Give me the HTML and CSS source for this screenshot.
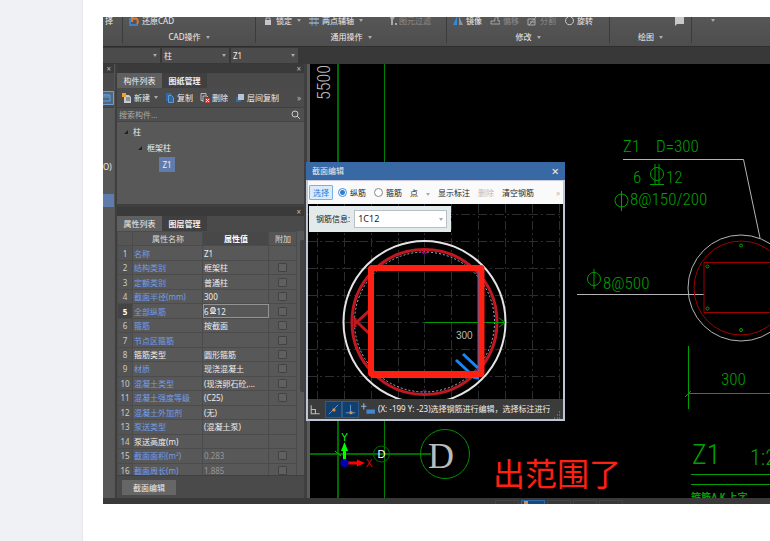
FILE: index.html
```html
<!DOCTYPE html>
<html>
<head>
<meta charset="utf-8">
<title>截面编辑</title>
<link rel="stylesheet" href="styles.css">
</head>
<body>
<main class="page">
<div class="app">
  <header class="ribbon">
    <section class="group"><div class="tools"><span>择</span></div></section>
    <section class="group">
      <div class="tools"><button class="tool"><svg class="ico" viewBox="0 0 10 10"><path d="M1 2v7h8" fill="none" stroke="#3f7fc4" stroke-width="2"/><path d="M3 6V1l2 2c3-2 5 2 3 5" fill="none" stroke="#e0792c" stroke-width="2"/></svg>还原CAD</button></div>
      <div class="caption">CAD操作<i class="caret"></i></div>
    </section>
    <section class="group">
      <div class="tools lockset">
        <button class="tool"><svg class="ico" viewBox="0 0 10 10"><path d="M3 5V2h4v3" fill="none" stroke="#bbb"/><path d="M2 4h6v5H2z" fill="#c4c8cc"/></svg>锁定<i class="caret"></i></button>
        <button class="tool"><svg class="ico" viewBox="0 0 10 10"><path d="M3 0v10M7 0v10" stroke="#4f9bd8"/><path d="M0 3h10M0 7h10" stroke="#c8ccd0"/></svg>两点辅轴<i class="caret"></i></button>
        <button class="tool off last"><svg class="ico" viewBox="0 0 10 10"><path d="M2 1h5L5 4v5H3V4z" fill="#aaa"/><path d="M7 8h2" stroke="#aaa" stroke-width="2"/></svg>图元过滤</button>
      </div>
      <div class="caption mid">通用操作<i class="caret"></i></div>
    </section>
    <section class="group">
      <div class="tools edits">
        <button class="tool"><svg class="ico" viewBox="0 0 10 10"><path d="M4 0v9H0z" fill="#2f8be0"/><path d="M6 0v9h4z" fill="#8b9299"/></svg>镜像</button>
        <button class="tool off"><svg class="ico" viewBox="0 0 10 10"><path d="M1 8h9M1 5h4c-1-3 1-4 3-4v4h2v3M1 5v3" fill="none" stroke="#a4a4a4"/></svg>偏移</button>
        <button class="tool off"><svg class="ico" viewBox="0 0 10 10"><path d="M1 3h7v6H1zM2 9l7-8M3 6h5" fill="none" stroke="#aaa"/></svg>分割</button>
        <button class="tool"><svg class="ico" viewBox="0 0 10 10"><path d="M4 1a4 4 0 1 0 3 0" fill="none" stroke="#ccc"/></svg>旋转</button>
      </div>
      <div class="caption">修改<i class="caret"></i></div>
    </section>
    <section class="group">
      <div class="tools end"><svg class="ico" viewBox="0 0 10 10"><path d="M1 0h9v8H3l-2 2z" fill="#c9c9c9"/></svg></div>
      <div class="caption">绘图<i class="caret"></i></div>
    </section>
    <section class="group"><div class="tools more"><i class="caret"></i></div></section>
  </header>

  <nav class="pickers">
    <div class="pick"><select aria-label="楼层"><option></option></select><i class="caret"></i></div>
    <div class="pick"><select aria-label="构件"><option>柱</option></select><i class="caret"></i></div>
    <div class="pick"><select aria-label="名称"><option>Z1</option></select><i class="caret"></i></div>
  </nav>

  <div class="work">
    <aside class="sliver">
      <div class="strip"><button class="close">×</button></div>
      <div class="tabs"></div>
      <div class="bar"><svg class="sel" viewBox="0 0 11 14"><path d="M0 .5h10.500v13H0" fill="#52667d" stroke="#6c9fd4"/><path d="M0 4h7v6H0M0 6h7M2 3v2M5 3v2" fill="none" stroke="#5ba2e6"/></svg></div>
      <div class="code">O)</div>
      <div class="mark"></div>
    </aside>

    <aside class="side">
      <section class="panel">
        <div class="strip"><button class="close">×</button></div>
        <div class="tabs"><button class="tab on">构件列表</button><button class="tab">图纸管理</button></div>
        <div class="bar">
          <button class="tool"><svg class="ico" viewBox="0 0 10 10"><path d="M2 2h5l2 2v6H2z" fill="#c8ccd0"/><path d="M4 5h4M4 7h4" stroke="#555"/><path d="M0 0h4v4H0z" fill="#f0a030"/></svg>新建<i class="caret"></i></button>
          <button class="tool"><svg class="ico" viewBox="0 0 10 10"><path d="M1 0h5l1 2v6H1z" fill="#2f69a8"/><path d="M3.500 2.500h3l2 2v5h-5z" fill="#35669c" stroke="#5b9bd8"/></svg>复制</button>
          <button class="tool"><svg class="ico" viewBox="0 0 10 10"><path d="M1 .5h5v2M1 .5v7h2M3 3h4l1 1M3 3v6" fill="none" stroke="#bbb"/><path d="M5 5h5v5H5z" fill="#cf3c3c"/><path d="M6 6l3 3M9 6L6 9" stroke="#fff"/></svg>删除</button>
          <button class="tool"><svg class="ico" viewBox="0 0 10 10"><path d="M1 4h5v5H1z" fill="#38699f"/><path d="M3 1h6v6H3z" fill="#b9c4d2"/></svg>层间复制</button>
          <span class="chev">»</span>
        </div>
        <label class="search"><input type="text" aria-label="搜索构件" placeholder="搜索构件..."><svg class="ico" viewBox="0 0 10 10"><circle cx="4" cy="4" r="3" fill="none" stroke="#ccc"/><path d="M6 6l3 3" stroke="#ccc"/></svg></label>
        <ul class="tree">
          <li class="l1"><i class="tri"></i>柱</li>
          <li class="l2"><i class="tri"></i>框架柱</li>
          <li class="l3"><span class="chosen">Z1</span></li>
        </ul>
      </section>

      <section class="panel props">
        <div class="strip"><button class="close">×</button></div>
        <div class="tabs"><button class="tab on">属性列表</button><button class="tab">图层管理</button></div>
        <div class="sheet">
          <table>
            <colgroup><col class="c1"><col class="c2"><col class="c3"><col class="c4"></colgroup>
            <tr><th></th><th>属性名称</th><th class="hot">属性值</th><th>附加</th></tr>
            <tr><td>1</td><td>名称</td><td>Z1</td><td></td></tr>
            <tr><td>2</td><td>结构类别</td><td>框架柱</td><td><input type="checkbox" aria-label="结构类别"></td></tr>
            <tr><td>3</td><td>定额类别</td><td>普通柱</td><td><input type="checkbox" aria-label="定额类别"></td></tr>
            <tr><td>4</td><td>截面半径(mm)</td><td>300</td><td><input type="checkbox" aria-label="截面半径"></td></tr>
            <tr class="cur"><td>5</td><td>全部纵筋</td><td>6<svg class="bar-sign" viewBox="0 0 8 8"><path d="M3 0v6M5 0v6M1 6.500h6" stroke="#ddd"/><circle cx="4" cy="3" r="2.500" fill="none" stroke="#ddd"/></svg>12</td><td><input type="checkbox" aria-label="全部纵筋"></td></tr>
            <tr><td>6</td><td>箍筋</td><td>按截面</td><td><input type="checkbox" aria-label="箍筋"></td></tr>
            <tr><td>7</td><td>节点区箍筋</td><td></td><td><input type="checkbox" aria-label="节点区箍筋"></td></tr>
            <tr class="plain"><td>8</td><td>箍筋类型</td><td>圆形箍筋</td><td><input type="checkbox" aria-label="箍筋类型"></td></tr>
            <tr><td>9</td><td>材质</td><td>现浇混凝土</td><td><input type="checkbox" aria-label="材质"></td></tr>
            <tr><td>10</td><td>混凝土类型</td><td>(现浇卵石砼,...</td><td><input type="checkbox" aria-label="混凝土类型"></td></tr>
            <tr><td>11</td><td>混凝土强度等级</td><td>(C25)</td><td><input type="checkbox" aria-label="混凝土强度等级"></td></tr>
            <tr><td>12</td><td>混凝土外加剂</td><td>(无)</td><td></td></tr>
            <tr><td>13</td><td>泵送类型</td><td>(混凝土泵)</td><td></td></tr>
            <tr class="plain"><td>14</td><td>泵送高度(m)</td><td></td><td></td></tr>
            <tr class="dim"><td>15</td><td>截面面积(m²)</td><td>0.283</td><td><input type="checkbox" aria-label="截面面积"></td></tr>
            <tr class="dim"><td>16</td><td>截面周长(m)</td><td>1.885</td><td><input type="checkbox" aria-label="截面周长"></td></tr>
          </table>
          <div class="rail"><div class="thumb"></div></div>
        </div>
        <div class="foot"><button class="edit">截面编辑</button></div>
      </section>
    </aside>

    <section class="canvas">
      <svg class="drawing">
        <g transform="translate(-310 -64)" fill="none">
          <g stroke="#006c00">
            <path d="M338 64V498M310 454H431" stroke-width="2"/>
            <path d="M384.500 64V498" stroke="#008000"/>
            <circle cx="381.500" cy="454" r="8"/>
            <circle cx="445" cy="454" r="24.500" stroke="#009000"/>
            <path d="M335 451l6 5" stroke="#00d000"/>
          </g>
          <text x="-100" y="330" transform="rotate(-90)" class="cad gray" font-size="18">5500</text>
          <text x="381.500" y="458" class="tiny" text-anchor="middle">D</text>
          <text x="441" y="468" class="serif" text-anchor="middle">D</text>
          <path d="M344.500 462V449" stroke="#0f0" stroke-width="3"/><path d="M341 451l3.500-9 3.500 9z" fill="#0f0"/>
          <path d="M346 463h13" stroke="#f00" stroke-width="3"/><path d="M357 459.500l8 3.500-8 3.500z" fill="#f00"/>
          <circle cx="344.500" cy="463" r="4" fill="#0000b8"/>
          <text x="344.500" y="441" class="axis" fill="#0f0" text-anchor="middle">Y</text>
          <text x="369" y="467" class="axis" fill="#e00000" text-anchor="middle">X</text>

          <path d="M623 159.500H743.500L760 238M577 294.500H704" stroke="#b4b4b4"/>
          <circle cx="741" cy="288" r="53" stroke="#b4b4b4"/>
          <circle cx="741" cy="288" r="47" stroke="#a00000"/>
          <path d="M704 262.500H778V312.500H704z" stroke="#a00000"/>
          <g stroke="#00a000">
            <circle cx="741" cy="245.500" r="1.500"/><circle cx="707.500" cy="266.500" r="1.500"/><circle cx="707.500" cy="308.500" r="1.500"/><circle cx="741" cy="330" r="1.500"/>
            <circle cx="657" cy="174" r="6.500"/><path d="M655 164v20M659 164v20M650 184.500h14"/>
            <circle cx="621.500" cy="200.500" r="6.500"/><path d="M621.500 191v20"/>
            <circle cx="594" cy="279" r="6.500"/><path d="M594 269v20"/>
            <path d="M688.500 346v63M685 397l6-6M688 393.500H770M691 474.500H770M691 484.500H770"/>
          </g>
          <g class="cad green" font-size="17">
            <text x="623" y="152">Z1</text><text x="656" y="152">D=300</text>
            <text x="633" y="183">6</text><text x="666" y="183">12</text>
            <text x="630" y="205">8@150/200</text>
            <text x="603" y="289">8@500</text>
            <text x="721" y="385">300</text>
            <text x="692" y="464" font-size="28">Z1</text>
            <text x="750" y="465" font-size="22">1:2</text>
            <text x="691" y="501" font-size="10" class="foottext">箍筋∆ K 上字</text>
          </g>
          <text x="493" y="486" class="note">出范围了</text>
        </g>
      </svg>
    </section>

    <section class="dialog">
      <div class="title"><span>截面编辑</span><button class="close">×</button></div>
      <div class="options">
        <button class="pickbtn">选择</button>
        <label class="radio"><input type="radio" name="kind" checked>纵筋</label>
        <label class="radio"><input type="radio" name="kind">箍筋</label>
        <button class="opt point">点<i class="caret"></i></button>
        <button class="opt">显示标注</button>
        <button class="opt faded">删除</button>
        <button class="opt">清空钢筋</button>
        <span class="chev">»</span>
      </div>
      <div class="stage">
        <svg class="drawing">
          <g transform="translate(-308 -204)" fill="none">
            <path d="M317.500 204V400M344.500 204V400M371.500 204V400M398.500 204V400M424.500 204V400M451.500 204V400M478.500 204V400M505.500 204V400M532.500 204V400M559.500 204V400M308 214.500H564M308 241.500H564M308 268.500H564M308 295.500H564M308 322.500H564M308 349.500H564M308 376.500H564" stroke="#2b2e31" stroke-dasharray="9 3 2 3"/>
            <circle cx="424.500" cy="322" r="81" stroke="#e4e4e4" stroke-width="2"/>
            <circle cx="424.500" cy="322" r="72.500" stroke="#c01820" stroke-width="3"/>
            <circle cx="424.500" cy="322" r="70" stroke="#a9b2c8" stroke-dasharray="2 2"/>
            <path d="M371 309l-14 13 14 13M355 318v9" stroke="#c01820" stroke-width="3"/>
            <path d="M424.500 322.500H505M499 318l6 4.500-6 4.500" stroke="#009a00"/>
            <path d="M422 252l2.500 2 2.500-2M422 392l2.500-2 2.500 2" stroke="#c000c0"/>
            <path d="M478.500 270V374M371 377H478" stroke="#2472c8" stroke-width="2"/>
            <path d="M456 360l14 13M463 354l15 14M473 377l6 1" stroke="#1687f5" stroke-width="3"/>
            <rect x="371" y="268" width="110.500" height="106" rx="1" stroke="#ff2014" stroke-width="6"/>
            <text x="456" y="339" class="size">300</text>
          </g>
        </svg>
        <div class="info"><label for="rebar">钢筋信息:</label><div class="combo"><select id="rebar"><option>1C12</option></select><i class="caret"></i></div></div>
      </div>
      <div class="hint">
        <svg class="snap flat" viewBox="0 0 16 16"><path d="M3 4v8h8M3 8h4v4" fill="none" stroke="#bbb"/></svg>
        <svg class="snap" viewBox="0 0 16 16"><path d="M3 13L13 3" stroke="#5d9ddb"/><path d="M7 7h3v3H7z" fill="#f08a30"/></svg>
        <svg class="snap" viewBox="0 0 16 16"><path d="M8 3v8M3 11.500h10" stroke="#5d9ddb"/><path d="M7 10h3v3H7z" fill="#f08a30"/></svg>
        <svg class="snap flat" viewBox="0 0 16 16"><path d="M2 5h5M4.500 2v6" stroke="#8fb9e2"/><path d="M7 8h8v4H7z" fill="#4187d6"/></svg>
        <span class="msg">(X: -199 Y: -23)选择钢筋进行编辑，选择标注进行修改</span>
        <svg class="grip" viewBox="0 0 8 8"><path d="M6 1h1M4 4h1M6 4h1M1 7h1M4 7h1M6 7h1" stroke="#999"/></svg>
      </div>
    </section>
  </div>
  <footer class="status"><i class="cell"></i><i class="cell lamp"></i><i class="cell"></i><i class="cell"></i><i class="cell"></i></footer>
</div>
</main>
</body>
</html>
```
FILE: styles.css
```css
* { box-sizing: border-box; }
body { margin: 0; background: #f0f1f4; font: 8px/12px "Noto Sans", "Noto Sans CJK SC", sans-serif; color: #eee; }
button, select, input { font: inherit; color: inherit; background: none; border: 0; padding: 0; margin: 0; border-radius: 0; }
select { appearance: none; }
.page { min-height: 100vh; margin-left: 83px; padding: 17px 0 37px 20px; background: #fff; box-shadow: 0 0 2px #d4d6da; }
.app { display: flex; flex-direction: column; height: calc(100vh - 54px); background: #3a3a3a; overflow: hidden; }
.ico { width: 10px; height: 10px; flex: none; }
.caret { display: inline-block; flex: none; border: 2px solid transparent; border-top: 3px solid #aaa; border-bottom: 0; margin-left: 5px; }
.tool { display: flex; align-items: center; gap: 3px; white-space: nowrap; line-height: 12px; }
.tool .caret { margin-left: 2px; }
.off { color: #8c8c8c; }

.ribbon { flex: none; display: grid; grid-template-columns: 20px 133px 191px 163px 82px 1fr; height: 30px; overflow: hidden; background: linear-gradient(#575757, #4d4d4d); border-bottom: 1px solid #2f2f2f; }
.group { border-right: 1px solid #3c3c3c; margin-bottom: 3px; min-width: 0; }
.group:first-child .tools { padding-left: 2px; }
.group:last-child { border: 0; }
.tools { display: flex; align-items: center; gap: 7px; height: 7px; padding-left: 6px; }
.edits { gap: 8px; }
.lockset { gap: 8px; padding: 0 15px 0 7px; }
.lockset .last { margin-left: auto; gap: 1px; }
.tools.end { justify-content: flex-end; padding-right: 7px; }
.tools.more { padding-left: 14px; }
.caption { display: flex; align-items: center; justify-content: center; height: 12px; margin-top: 7px; }

.pickers { flex: none; display: flex; gap: 2px; height: 17px; padding: 1px 0; background: #383838; }
.pick { display: flex; align-items: center; width: 67px; padding: 0 3px 0 2px; background: #4b4b4b; }
.pick:first-child { width: 57px; }
.pick select { flex: 1; min-width: 0; }

.work { position: relative; flex: 1; display: flex; min-height: 0; }
.strip { display: flex; justify-content: flex-end; align-items: center; height: 9px; padding-right: 3px; background: #3a3a3a; }
.close { line-height: 9px; }
.strip .close { color: #bbb; }
.tabs { display: flex; height: 15px; background: #4a4a4a; }
.tab { width: 45px; background: #404040; font-weight: 600; }
.tab.on { background: #5f5f5f; font-weight: 400; }
.bar { display: flex; align-items: center; gap: 7px; height: 20px; padding: 0 3px 0 5px; background: #4b4b4b; border-bottom: 1px solid #404040; }
.bar .tool { gap: 2px; }
.chev { margin-left: auto; color: #bbb; }

.sliver { flex: none; width: 11px; background: #585858; }
.sliver .bar { padding: 0; }
.sel { width: 11px; height: 14px; flex: none; }
.code { margin-top: 53px; }
.mark { height: 13px; margin-top: 21px; background: #5f7cad; }

.side { flex: none; display: flex; flex-direction: column; gap: 3px; width: 196px; padding: 0 3px 0 2px; background: #3f3f3f; border-left: 1px solid #555; border-right: 3px solid #5a5a5a; }
.panel { background: #585858; }
.search { display: flex; align-items: center; height: 14px; padding: 0 3px 0 2px; background: #4f4f4f; border-bottom: 1px solid #444; }
.search input { flex: 1; min-width: 0; }
.search input::placeholder { color: #aaa; }
.tree { list-style: none; margin: 0; padding: 2px 0 0; height: 82px; }
.tree li { display: flex; align-items: center; gap: 5px; height: 16px; }
.l1 { padding-left: 7px; }
.l2 { padding-left: 21px; }
.l3 { padding-left: 42px; }
.tri { border: 2px solid transparent; border-right-color: #222; border-bottom-color: #222; }
.chosen { width: 16px; line-height: 15px; text-align: center; background: #5f7cad; }

.props { flex: 1; display: flex; flex-direction: column; min-height: 0; }
.props > div { flex: none; }
.props > .sheet { flex: 1; display: flex; min-height: 0; overflow: hidden; }
table { flex: none; table-layout: fixed; width: 179px; height: 247px; border-collapse: collapse; }
.c1 { width: 15px; } .c2 { width: 70px; } .c3 { width: 66px; } .c4 { width: 28px; }
th, td { padding: 0 0 0 1px; line-height: 11px; font-weight: 400; text-align: left; white-space: nowrap; border: 1px solid #4b4b4b; }
th { text-align: center; color: #ddd; background: #555; }
th.hot { font-weight: 600; background: #484848; color: #fff; }
td:first-child { padding: 0; text-align: center; color: #ccc; background: #535353; }
td:nth-child(2) { color: #729ee8; }
.plain td:nth-child(2) { color: #eee; }
.dim td:nth-child(3) { color: #969696; }
.cur td:first-child { font-weight: 700; color: #fff; background: #444; }
.cur td:nth-child(3) { outline: 1px solid #939393; outline-offset: -1px; }
td:last-child { padding: 0; text-align: center; }
td input { appearance: none; display: block; width: 9px; height: 9px; margin: 0 auto; border: 1px solid #424242; border-radius: 1px; background: #606060; }
.bar-sign { width: 8px; height: 8px; }
.rail { flex: 1; padding: 9px 3px 0; }
.thumb { width: 5px; height: 152px; border-radius: 2px; background: #424242; }
.foot { padding: 4px 5px 3px; background: #4a4a4a; border-top: 1px solid #404040; }
.edit { display: block; width: 54px; height: 15px; background: #666; }

.canvas { flex: 1; min-width: 0; background: #000; }
.drawing { display: block; width: 100%; height: 100%; }
.cad { font-family: "Roboto Condensed", "Liberation Sans Narrow", "Noto Sans CJK SC", sans-serif; font-weight: 300; }
.green { fill: #00a000; }
.gray { fill: #bbb; }
.foottext { font-weight: 700; }
.tiny { font: 11px "Liberation Sans", sans-serif; fill: #fff; }
.serif { font: 36px "Liberation Serif", serif; fill: #bbb; }
.axis { font: 10px "Liberation Sans", sans-serif; }
.note { font: 32px "Noto Sans CJK SC", sans-serif; fill: #ff2014; }
.size { font: 10px "Liberation Sans", sans-serif; fill: #bbb; }

.dialog { position: absolute; left: 203px; top: 98px; display: flex; flex-direction: column; width: 259px; height: 259px; border: 2px solid #bdc6d4; border-top: 0; background: #000; }
.title { display: flex; justify-content: space-between; align-items: center; height: 18px; margin: 0 -2px; padding: 0 6px; background: #3869a5; }
.title .close { font-size: 13px; }
.options { display: flex; align-items: center; gap: 8px; height: 24px; padding: 0 3px 0 1px; background: #fafafa; color: #222; white-space: nowrap; border-top: 1px solid #ccd; }
.pickbtn { width: 24px; height: 15px; margin-right: -3px; color: #2a7fd8; background: #dcebfa; border: 1px solid #78b0ea; border-radius: 1px; }
.radio { display: flex; align-items: center; gap: 3px; }
.radio input { appearance: none; width: 9px; height: 9px; border: 1px solid #888; border-radius: 50%; background: #fff; }
.radio input:checked { border-color: #4a8fd8; background: radial-gradient(#2a7fd8 2px, #fff 3px); }
.point .caret { margin-left: 8px; }
.faded { color: #bbb; }
.stage { position: relative; flex: 1; min-height: 0; }
.info { position: absolute; left: 1px; top: 2px; display: flex; align-items: center; gap: 4px; height: 26px; padding: 0 4px 0 7px; background: #e2eaec; color: #222; }
.combo { display: flex; align-items: center; width: 93px; height: 18px; padding: 0 3px; background: #fff; border: 1px solid #b8c0c6; }
.combo select { flex: 1; font-size: 9px; }
.hint { display: flex; align-items: center; height: 20px; padding-right: 2px; background: #3b3b3b; }
.snap { flex: none; width: 17px; height: 17px; background: #123f6e; border: 1px solid #2a5b8c; }
.snap.flat { background: none; border: 0; }
.msg { flex: 1; min-width: 0; margin: 0 3px 0 2px; overflow: hidden; white-space: nowrap; }
.grip { align-self: flex-end; flex: none; width: 8px; height: 8px; }

.status { flex: none; display: flex; gap: 2px; height: 6px; padding: 2px 0 0 392px; background: #393939; }
.cell { width: 24px; height: 4px; border: 1px solid #444; border-bottom: 0; }
.lamp { background: linear-gradient(90deg, #174a7c 2px, #d08a50 2px, #d08a50 6px, #174a7c 6px); border-color: #2a6aa8; }
```
